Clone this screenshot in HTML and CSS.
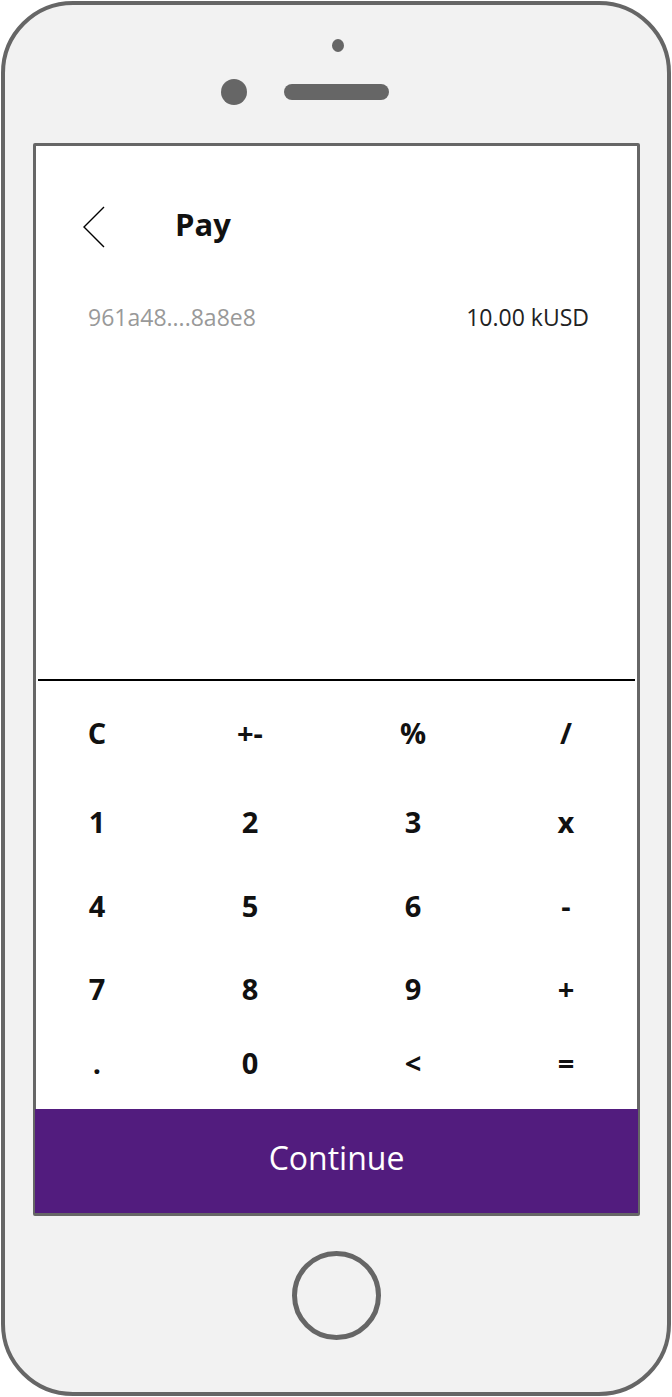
FILE: index.html
```html
<!DOCTYPE html>
<html>
<head>
<meta charset="utf-8">
<link rel="stylesheet" href="styles.css">
</head>
<body>
<div class="phone">
  <div class="phone-top">
    <div class="sensor"></div>
    <div class="ear">
      <div class="lens"></div>
      <div class="speaker"></div>
    </div>
  </div>
  <div class="screen">
    <div class="display">
      <div class="header">
        <svg class="back" width="22" height="42" viewBox="0 0 22 42"><polyline points="21,1 1,21 21,41" fill="none" stroke="#000" stroke-width="1.4"/></svg>
        <div class="title">Pay</div>
      </div>
      <div class="info">
        <span class="addr">961a48....8a8e8</span>
        <span class="amount">10.00 kUSD</span>
      </div>
    </div>
    <div class="divider"></div>
    <div class="keypad">
      <div class="key">C</div><div class="key">+-</div><div class="key">%</div><div class="key">/</div>
      <div class="key">1</div><div class="key">2</div><div class="key">3</div><div class="key">x</div>
      <div class="key">4</div><div class="key">5</div><div class="key">6</div><div class="key">-</div>
      <div class="key">7</div><div class="key">8</div><div class="key">9</div><div class="key">+</div>
      <div class="key">.</div><div class="key">0</div><div class="key">&lt;</div><div class="key">=</div>
    </div>
    <div class="continue">Continue</div>
  </div>
  <div class="phone-bottom">
    <div class="home"></div>
  </div>
</div>
</body>
</html>
```
FILE: styles.css
```css
* { box-sizing: border-box; }
html, body { margin: 0; padding: 0; background: #fff; }
body { font-family: "Open Sans", "Liberation Sans", sans-serif; }

.phone {
  margin: 1px 0 0 1px;
  width: 670px;
  height: 1395px;
  border: 4px solid #666;
  border-radius: 72px;
  background: #f2f2f2;
  display: flex;
  flex-direction: column;
}

.phone-top {
  height: 138px;
  display: flex;
  flex-direction: column;
  align-items: center;
  padding-top: 34px;
}
.sensor {
  width: 12px;
  height: 13px;
  border-radius: 50%;
  background: #666;
  margin-left: 4px;
}
.ear {
  margin-top: 27px;
  display: flex;
  align-items: center;
  gap: 37px;
  margin-right: 62px;
}
.lens {
  width: 26px;
  height: 26px;
  border-radius: 50%;
  background: #666;
}
.speaker {
  width: 105px;
  height: 16px;
  border-radius: 8px;
  background: #666;
}

.screen {
  margin-left: 28px;
  width: 607px;
  height: 1073px;
  border: 3px solid #666;
  border-radius: 2px;
  background: #fff;
  display: flex;
  flex-direction: column;
}

.display { height: 533px; }
.header {
  margin-top: 61px;
  padding-left: 47px;
  height: 40px;
  display: flex;
  align-items: center;
}
.back { display: block; }
.title {
  margin-left: 70px;
  font-size: 31px;
  font-weight: 700;
  color: #111;
  margin-top: -6px;
}
.info {
  margin-top: 55px;
  padding: 0 48px 0 52px;
  display: flex;
  justify-content: space-between;
  font-size: 23px;
  line-height: 30px;
}
.addr { color: #999; }
.amount { color: #222; }

.divider {
  height: 2px;
  margin: 0 2px;
  background: #000;
}

.keypad {
  height: 428px;
  padding: 6px 0 16px 11px;
  display: grid;
  grid-template-columns: 100px 53px 100px 63px 100px 53px 100px;
  grid-template-rows: 90px 88px 80px 86px 62px;
}
.key {
  display: flex;
  align-items: center;
  justify-content: center;
  font-size: 29px;
  font-weight: 700;
  color: #111;
}
.key:nth-child(4n+1) { grid-column: 1; }
.key:nth-child(4n+2) { grid-column: 3; }
.key:nth-child(4n+3) { grid-column: 5; }
.key:nth-child(4n+4) { grid-column: 7; }

.continue {
  height: 104px;
  margin: 0 -1px;
  padding-bottom: 7px;
  background: #521c7e;
  color: #fff;
  font-size: 32px;
  display: flex;
  align-items: center;
  justify-content: center;
}

.phone-bottom {
  flex: 1;
  display: flex;
  justify-content: center;
  padding-top: 35px;
}
.home {
  width: 89px;
  height: 89px;
  border: 5px solid #666;
  border-radius: 50%;
}
```
